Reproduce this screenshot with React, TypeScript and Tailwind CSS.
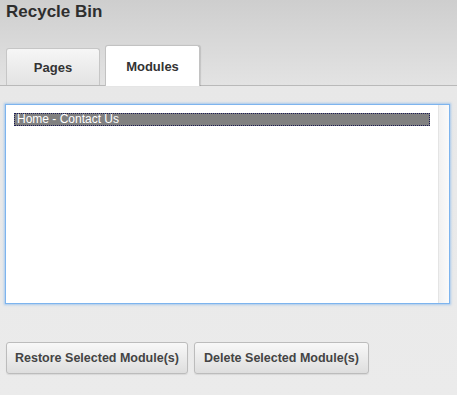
export default function App() {
  return (
    <div
      className="w-full h-[395px] overflow-hidden bg-[linear-gradient(to_bottom,#cecece_0px,#e3e3e3_85px,#e8e8e8_86px,#ebebeb_395px)] text-[#333]"
      style={{ fontFamily: '"Liberation Sans", Arial, sans-serif' }}
    >
      {/* Title */}
      <h1 className="pl-[6px] pt-[1px] text-[17px] leading-[22px] font-bold text-[#2e2e2e]">Recycle Bin</h1>

      {/* Tabs */}
      <div className="mt-[22px] flex items-end gap-[5px] pl-[6px] border-b border-[#b9b9b9]">
        <button className="w-[94px] h-[37px] rounded-t-[3px] border border-b-0 border-[#c6c6c6] bg-[linear-gradient(to_bottom,#f6f6f6,#e3e3e3)] text-[13px] font-bold text-[#333] pt-[1px]">
          Pages
        </button>
        <button className="w-[95px] h-[41px] -mb-px rounded-t-[3px] border border-b-0 border-[#c2c2c2] bg-white text-[13px] font-bold text-[#333] pt-[2px] shadow-[1px_0_1px_rgba(0,0,0,0.12)]">
          Modules
        </button>
      </div>

      {/* List box */}
      <div className="mt-[18px] ml-[5px] w-[445px] h-[200px] border border-[#7db4ee] shadow-[0_0_2px_1px_rgba(125,180,238,0.6)] bg-white flex">
        <div className="flex-1 pt-[8px] pl-[8px]">
          <div className="w-[416px] h-[13px] bg-[#808080] border border-dotted border-[#1b1b55] text-white text-[12px] leading-[11px] pl-[2px]">
            Home - Contact Us
          </div>
        </div>
        <div className="w-[11px] h-full border-l border-[#e4e4e4] bg-[linear-gradient(to_right,#f1f1f1,#fafafa)]" />
      </div>

      {/* Actions */}
      <div className="mt-[38px] ml-[6px] flex gap-[6px]">
        <button className="w-[182px] h-[32px] rounded-[3px] border border-[#bcbcbc] bg-[linear-gradient(to_bottom,#f8f8f8,#dedede)] text-[12.5px] font-bold text-[#444] shadow-[0_1px_1px_rgba(0,0,0,0.08)]">
          Restore Selected Module(s)
        </button>
        <button className="w-[175px] h-[32px] rounded-[3px] border border-[#bcbcbc] bg-[linear-gradient(to_bottom,#f8f8f8,#dedede)] text-[12.5px] font-bold text-[#444] shadow-[0_1px_1px_rgba(0,0,0,0.08)]">
          Delete Selected Module(s)
        </button>
      </div>
    </div>
  );
}
